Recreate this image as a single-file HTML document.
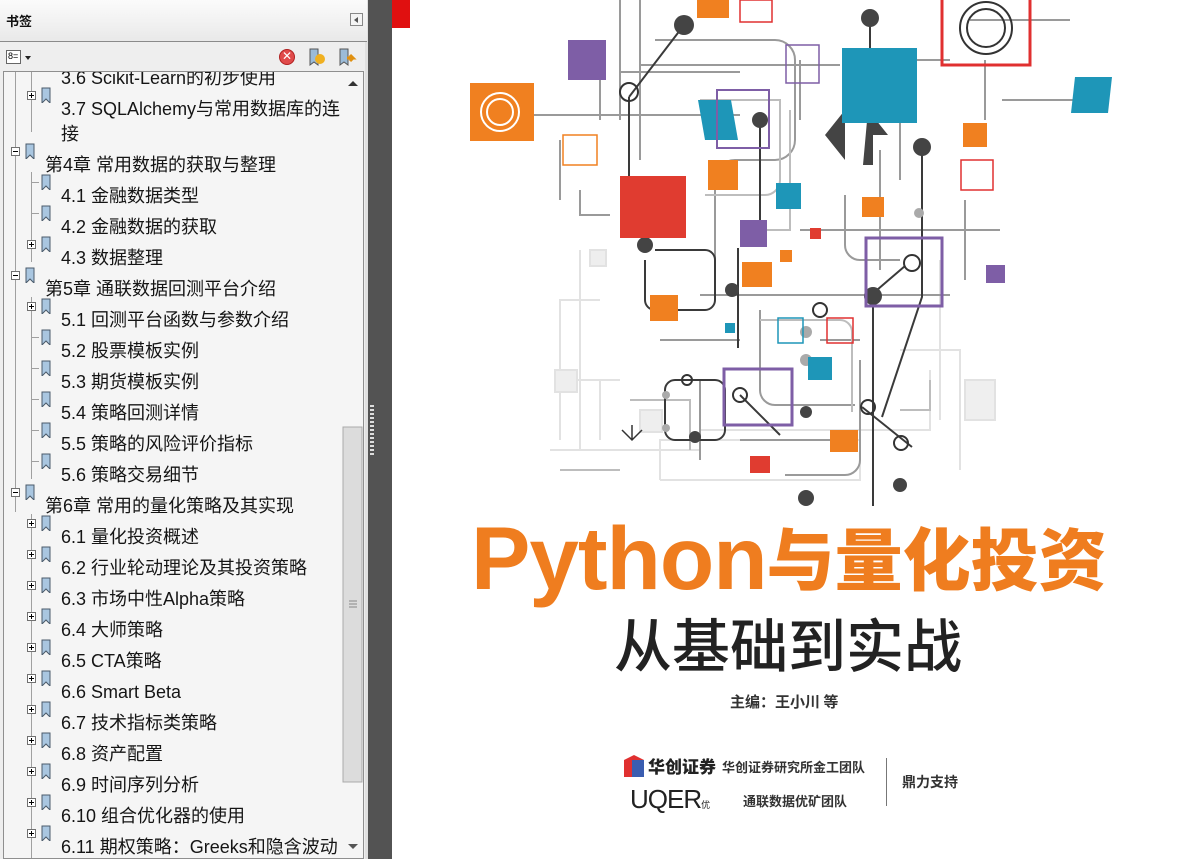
<!DOCTYPE html>
<html><head><meta charset="utf-8"><style>
*{margin:0;padding:0;box-sizing:border-box}
body{width:1195px;height:859px;overflow:hidden;background:#535353;position:relative;font-family:"Liberation Sans","Noto Sans CJK SC",sans-serif}
#panel{position:absolute;left:0;top:0;width:368px;height:859px;background:#eeeeee;border-right:3px solid #e0e0e0}
#hdr{position:absolute;left:0;top:0;width:367px;height:42px;background:linear-gradient(#fbfbfb,#e9e9e9);border-bottom:1px solid #8a8a8a}
#hdr b{position:absolute;left:6px;top:11px;font-size:13px;color:#111}
#tree{position:absolute;left:3px;top:71px;width:361px;height:788px;background:#f5f5f5;border:1px solid #8f8f8f;overflow:hidden}
.r{position:absolute;font-size:18px;color:#151515;white-space:nowrap;line-height:22px}
.pb{position:absolute;width:9px;height:9px;border:1px solid #707070;background:#fff}
.pb:before{content:"";position:absolute;left:1px;top:3px;width:5px;height:1px;background:#000}
.pb.p:after{content:"";position:absolute;left:3px;top:1px;width:1px;height:5px;background:#000}
.bm{position:absolute;width:10px;height:16px}
#page{position:absolute;left:392px;top:0;width:803px;height:859px;background:#fff;overflow:hidden}
</style></head><body>
<div id="panel">
<div id="hdr"><b>书签</b>
<div style="position:absolute;left:350px;top:13px;width:13px;height:13px;border:1px solid #888;background:#f4f4f4"><div style="position:absolute;left:3px;top:3px;border-right:4px solid #555;border-top:3px solid transparent;border-bottom:3px solid transparent"></div></div></div>
<div style="position:absolute;left:6px;top:50px;width:15px;height:14px;border:1px solid #666;background:#fff;font-size:9px;line-height:11px;padding-left:1px">8=</div>
<div style="position:absolute;left:25px;top:56px;border-top:4px solid #222;border-left:3px solid transparent;border-right:3px solid transparent"></div>
<div style="position:absolute;left:279px;top:49px;width:16px;height:16px;border-radius:50%;background:#e04a4a;border:1px solid #b02020;color:#fff;font-size:12px;line-height:13px;text-align:center">✕</div>
<svg style="position:absolute;left:308px;top:48px" width="20" height="19"><path d="M2 1h8v16l-4-3-4 3z" fill="#9bbbd8" stroke="#555"/><circle cx="12" cy="11" r="5" fill="#f0b020"/></svg>
<svg style="position:absolute;left:338px;top:48px" width="20" height="19"><path d="M2 1h8v16l-4-3-4 3z" fill="#9bbbd8" stroke="#555"/><path d="M9 10h6l-3-3M15 10l-3 3" stroke="#e09010" stroke-width="3" fill="none"/></svg>
<div id="tree">
<svg style="position:absolute;left:0;top:0" width="361" height="788">
<g stroke="#a0a0a0" stroke-width="1">
<line x1="11.5" y1="0" x2="11.5" y2="440"/>
<line x1="27.5" y1="0" x2="27.5" y2="60"/>
<line x1="27.5" y1="100" x2="27.5" y2="190"/>
<line x1="27.5" y1="225" x2="27.5" y2="407"/>
<line x1="27.5" y1="442" x2="27.5" y2="788"/>
</g>
<rect x="339" y="355" width="19" height="355" fill="#dcdcdc" stroke="#aaa"/>
<g stroke="#888"><line x1="345" y1="529" x2="353" y2="529"/><line x1="345" y1="532" x2="353" y2="532"/><line x1="345" y1="535" x2="353" y2="535"/></g>
<path d="M344 14l5-5 5 5z" fill="#333"/><path d="M344 772l5 5 5-5z" fill="#555"/>
</svg>
</div>
</div>
<div id="rows"></div>
<script>
var L=[[2,"3.6 Scikit-Learn的初步使用",78,1],[2,"3.7 SQLAlchemy与常用数据库的连",109,1],[3,"接",134,0],[1,"第4章 常用数据的获取与整理",165,0],[2,"4.1 金融数据类型",196,2],[2,"4.2 金融数据的获取",227,2],[2,"4.3 数据整理",258,1],[1,"第5章 通联数据回测平台介绍",289,0],[2,"5.1 回测平台函数与参数介绍",320,1],[2,"5.2 股票模板实例",351,2],[2,"5.3 期货模板实例",382,2],[2,"5.4 策略回测详情",413,2],[2,"5.5 策略的风险评价指标",444,2],[2,"5.6 策略交易细节",475,2],[1,"第6章 常用的量化策略及其实现",506,0],[2,"6.1 量化投资概述",537,1],[2,"6.2 行业轮动理论及其投资策略",568,1],[2,"6.3 市场中性Alpha策略",599,1],[2,"6.4 大师策略",630,1],[2,"6.5 CTA策略",661,1],[2,"6.6 Smart Beta",692,1],[2,"6.7 技术指标类策略",723,1],[2,"6.8 资产配置",754,1],[2,"6.9 时间序列分析",785,1],[2,"6.10 组合优化器的使用",816,1],[2,"6.11 期权策略：Greeks和隐含波动",847,1]];
var h="";
L.forEach(function(e){var lv=e[0],y=e[2];
 if(lv==3){h+='<div class="r" style="left:61px;top:'+(y-11)+'px">'+e[1]+'</div>';return;}
 var tx=lv==1?45:61,bx=lv==1?11:27,ix=lv==1?25:41;
 if(lv==1)h+='<div class="pb" style="left:'+bx+'px;top:'+(y-18)+'px"></div>';
 else if(e[3]==1)h+='<div class="pb p" style="left:'+bx+'px;top:'+(y-18)+'px"></div>';
 else h+='<div style="position:absolute;left:'+(bx+4)+'px;top:'+(y-14)+'px;width:8px;height:1px;background:#a0a0a0"></div>';
 h+='<svg class="bm" style="left:'+ix+'px;top:'+(y-22)+'px" width="11" height="17"><path d="M1 1h8v15l-4-4-4 4z" fill="#a9c6e0" stroke="#4a5a6a"/></svg>';
 h+='<div class="r" style="left:'+tx+'px;top:'+(y-11)+'px">'+e[1]+'</div>';});
var d=document.getElementById("rows");d.style.cssText="position:absolute;left:0;top:0;width:342px;height:859px;overflow:hidden;clip-path:inset(72px 0 1px 0)";d.innerHTML=h;
</script>
<div style="position:absolute;left:370px;top:405px;width:4px;height:50px;background:repeating-linear-gradient(#ddd 0 2px,transparent 2px 4px)"></div>
<div id="page">
<svg width="803" height="859" style="position:absolute;left:0;top:0">
<g transform="translate(-392,0)">
<rect x="392" y="0" width="18" height="28" fill="#e01010"/>
<g stroke="#e2e2e2" stroke-width="2" fill="none">
<path d="M580 250v200h120M600 300h-40v140M620 380h-60M660 480v-40h200v40h-200M700 430h230v-60M900 350h60v120M940 260v160M550 450h80M600 380v60"/>
<rect x="555" y="370" width="22" height="22" fill="#eee"/><rect x="640" y="410" width="22" height="22" fill="#eee"/><rect x="965" y="380" width="30" height="40" fill="#efefef"/><rect x="590" y="250" width="16" height="16" fill="#eee"/>
</g>
<g stroke="#9a9a9a" stroke-width="2" fill="none">
<path d="M530 115h210M560 140v60M640 0v160M640 65h200M800 60v60M620 72h120M655 40h120a20 20 0 0 1 20 20v80a20 20 0 0 1-20 20h-40a20 20 0 0 0-20 20v80M800 230h200M970 20h100M1002 100h100M985 60v60M965 200v80M900 260h-40a15 15 0 0 1-15-15v-50M880 150v120M700 295h250M900 120v60M660 340h80M900 60h50M760 310v80a15 15 0 0 0 15 15h80M820 340h40M860 360v100a15 15 0 0 1-15 15h-60M700 380v80M740 440h110M620 0v120M600 60v60M580 190v25h30"/>
</g>
<g stroke="#bdbdbd" stroke-width="2" fill="none">
<path d="M700 100h80v80a15 15 0 0 1-15 15h-60M790 110v120h-50M630 400h60v50M560 470h60M760 320h80a12 12 0 0 1 12 12v80M900 410h30v-30"/>
</g>
<g stroke="#3a3a3a" stroke-width="2" fill="none">
<path d="M684 25l-55 72M629 97v100M760 120v100M870 18v30M922 147v150l-40 120M905 266l-35 30M873 296v210M862 407l50 40M740 395l40 40M738 248v100M655 250h50a10 10 0 0 1 10 10v40a10 10 0 0 1-10 10h-50a10 10 0 0 1-10-10v-40"/>
<path d="M675 380h40a10 10 0 0 1 10 10v40a10 10 0 0 1-10 10h-40a10 10 0 0 1-10-10v-40a10 10 0 0 1 10-10"/>
</g>
<g fill="#444"><circle cx="684" cy="25" r="10"/><circle cx="870" cy="18" r="9"/><circle cx="760" cy="120" r="8"/><circle cx="922" cy="147" r="9"/><circle cx="645" cy="245" r="8"/><circle cx="732" cy="290" r="7"/><circle cx="873" cy="296" r="9"/><circle cx="900" cy="485" r="7"/><circle cx="806" cy="498" r="8"/><circle cx="695" cy="437" r="6"/><circle cx="806" cy="412" r="6"/><path d="M825 135l20-25v50zM868 110l20 25h-15v30h-10z"/></g>
<g fill="none" stroke="#333" stroke-width="2"><circle cx="629" cy="92" r="9"/><circle cx="912" cy="263" r="8"/><circle cx="820" cy="310" r="7"/><circle cx="740" cy="395" r="7"/><circle cx="868" cy="407" r="7"/><circle cx="901" cy="443" r="7"/><circle cx="687" cy="380" r="5"/></g>
<g fill="#aaa"><circle cx="806" cy="332" r="6"/><circle cx="806" cy="360" r="6"/><circle cx="666" cy="395" r="4"/><circle cx="666" cy="428" r="4"/><circle cx="919" cy="213" r="5"/></g>
<rect x="470" y="83" width="64" height="58" fill="#f08020"/><circle cx="500" cy="112" r="19" fill="none" stroke="#fff" stroke-width="2"/><circle cx="500" cy="112" r="13" fill="none" stroke="#fff" stroke-width="2"/>
<rect x="568" y="40" width="38" height="40" fill="#7e5ea6"/>
<rect x="620" y="176" width="66" height="62" fill="#e03c30"/>
<rect x="842" y="48" width="75" height="75" fill="#1e96b8"/>
<rect x="942" y="-5" width="88" height="70" fill="none" stroke="#e03030" stroke-width="3"/><circle cx="986" cy="28" r="26" fill="none" stroke="#333" stroke-width="2"/><circle cx="986" cy="28" r="19" fill="none" stroke="#333" stroke-width="2"/>
<path d="M1075 77h37l-4 36h-37z" fill="#1e96b8"/>
<rect x="963" y="123" width="24" height="24" fill="#f08020"/>
<rect x="708" y="160" width="30" height="30" fill="#f08020"/>
<rect x="776" y="183" width="25" height="26" fill="#1e96b8"/>
<rect x="740" y="220" width="27" height="27" fill="#7e5ea6"/>
<rect x="742" y="262" width="30" height="25" fill="#f08020"/>
<rect x="650" y="295" width="28" height="26" fill="#f08020"/>
<rect x="866" y="238" width="76" height="68" fill="none" stroke="#7e5ea6" stroke-width="3"/>
<rect x="808" y="357" width="24" height="23" fill="#1e96b8"/>
<rect x="830" y="430" width="28" height="22" fill="#f08020"/>
<rect x="750" y="456" width="20" height="17" fill="#e03c30"/>
<rect x="986" y="265" width="19" height="18" fill="#7e5ea6"/>
<rect x="862" y="197" width="22" height="20" fill="#f08020"/>
<rect x="697" y="0" width="32" height="18" fill="#f08020"/>
<path d="M698 100h33l7 40h-33z" fill="#1e96b8"/>
<rect x="724" y="369" width="68" height="56" fill="none" stroke="#7e5ea6" stroke-width="3"/>
<rect x="717" y="90" width="52" height="58" fill="none" stroke="#7e5ea6" stroke-width="2"/>
<rect x="786" y="45" width="33" height="38" fill="none" stroke="#7e5ea6" stroke-width="1.5"/>
<rect x="563" y="135" width="34" height="30" fill="none" stroke="#f08020" stroke-width="1.5"/>
<rect x="961" y="160" width="32" height="30" fill="none" stroke="#e03030" stroke-width="1.5"/>
<rect x="740" y="0" width="32" height="22" fill="none" stroke="#e03030" stroke-width="1.5"/>
<rect x="778" y="318" width="25" height="25" fill="none" stroke="#1e96b8" stroke-width="1.5"/>
<rect x="827" y="318" width="26" height="25" fill="none" stroke="#e03030" stroke-width="1.5"/>
<rect x="725" y="323" width="10" height="10" fill="#1e96b8"/>
<rect x="810" y="228" width="11" height="11" fill="#e03c30"/>
<rect x="780" y="250" width="12" height="12" fill="#f08020"/>
<path d="M622 430l10 10 10-10M632 440v-15" stroke="#333" stroke-width="1.5" fill="none"/>
</g>
</svg>
<div style="position:absolute;left:79px;top:506px;font-size:89px;font-weight:bold;color:#ef7d1f;white-space:nowrap;line-height:100px;letter-spacing:-1px">Python<span style="font-family:'Noto Sans CJK SC',sans-serif;font-weight:900;font-size:68px;letter-spacing:0;vertical-align:4px">与量化投资</span></div>
<div style="position:absolute;left:222px;top:604px;font-family:'Noto Sans CJK SC',sans-serif;font-size:58px;font-weight:500;color:#222;white-space:nowrap;line-height:76px">从基础到实战</div>
<div style="position:absolute;left:338px;top:691px;font-family:'Noto Sans CJK SC',sans-serif;font-size:15px;font-weight:bold;color:#333;white-space:nowrap">主编：王小川 等</div>
<svg style="position:absolute;left:230px;top:754px" width="24" height="24"><path d="M2 6l10-5 10 5v17H2z" fill="#e03030"/><rect x="10" y="6" width="12" height="17" fill="#3a5db0"/></svg>
<div style="position:absolute;left:256px;top:753px;font-family:'Noto Sans CJK SC',sans-serif;font-size:17px;font-weight:900;color:#222;white-space:nowrap">华创证券</div>
<div style="position:absolute;left:330px;top:757px;font-family:'Noto Sans CJK SC',sans-serif;font-size:13px;font-weight:bold;color:#333;white-space:nowrap">华创证券研究所金工团队</div>
<div style="position:absolute;left:238px;top:784px;font-size:26px;color:#222;white-space:nowrap;letter-spacing:-1px">UQER<span style="font-size:9px;font-family:'Noto Sans CJK SC',sans-serif">优</span></div>
<div style="position:absolute;left:351px;top:791px;font-family:'Noto Sans CJK SC',sans-serif;font-size:13px;font-weight:bold;color:#333;white-space:nowrap">通联数据优矿团队</div>
<div style="position:absolute;left:494px;top:758px;width:1px;height:48px;background:#777"></div>
<div style="position:absolute;left:510px;top:772px;font-family:'Noto Sans CJK SC',sans-serif;font-size:14px;font-weight:bold;color:#333;white-space:nowrap">鼎力支持</div>
</div>
</body></html>
